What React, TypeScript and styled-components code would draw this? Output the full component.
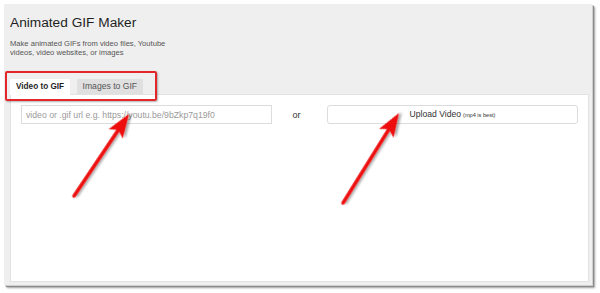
import React from "react";
import styled, { createGlobalStyle } from "styled-components";

const Global = createGlobalStyle`
  html, body { margin: 0; padding: 0; background: #ffffff; }
  body { font-family: "Liberation Sans", Arial, sans-serif; }
  * { box-sizing: border-box; }
`;

const Page = styled.div`
  position: relative;
  width: 600px;
  height: 293px;
  padding: 4px 0 0 4px;
  background: #ffffff;
  overflow: hidden;
`;

const Panel = styled.div`
  width: 588px;
  height: 281px;
  background: #efefef;
  display: flex;
  flex-direction: column;
  box-shadow: 1px 1px 0 #d0d0d0, 2px 2px 1px #8a8a8a, 3px 3px 2px rgba(0, 0, 0, 0.35);
`;

const Header = styled.div`
  padding: 11px 6px 0 6px;
`;

const Title = styled.h1`
  margin: 0;
  font-size: 13.7px;
  line-height: 16px;
  font-weight: normal;
  color: #1f1f1f;
`;

const Subtitle = styled.p`
  margin: 9px 0 0 0;
  max-width: 172px;
  font-size: 7.6px;
  line-height: 8.5px;
  color: #555;
`;

const Tabs = styled.div`
  display: flex;
  gap: 7px;
  margin-top: 22px;
  padding-left: 6px;
  position: relative;
  z-index: 1;
`;

const Tab = styled.div<{ $active?: boolean }>`
  height: ${(p) => (p.$active ? "16px" : "15px")};
  line-height: 15px;
  padding: 0 ${(p) => (p.$active ? "6px" : "5.5px")};
  font-size: ${(p) => (p.$active ? "8.2px" : "8.6px")};
  font-weight: ${(p) => (p.$active ? "bold" : "normal")};
  color: ${(p) => (p.$active ? "#1f1f1f" : "#555")};
  background: ${(p) => (p.$active ? "#ffffff" : "#e0e0e0")};
  margin-bottom: ${(p) => (p.$active ? "-1px" : "0")};
`;

const Content = styled.div`
  flex: 1;
  margin: 0 3px 3px 6px;
  background: #ffffff;
  border: 1px solid #e2e2e2;
  padding: 10px 10px 0 10px;
`;

const FormRow = styled.div`
  display: grid;
  grid-template-columns: 251px 1fr 251px;
  align-items: center;
`;

const UrlInput = styled.input`
  height: 19px;
  width: 100%;
  border: 1px solid #dcdcdc;
  padding: 0 0 0 4px;
  font-family: "Liberation Sans", Arial, sans-serif;
  font-size: 8.7px;
  color: #333;
  outline: none;
  &::placeholder { color: #9a9a9a; }
`;

const Or = styled.span`
  text-align: center;
  font-size: 9px;
  color: #333;
  padding-right: 6px;
`;

const UploadButton = styled.button`
  height: 19px;
  width: 100%;
  border: 1px solid #dcdcdc;
  border-radius: 3px;
  background: #ffffff;
  font-family: "Liberation Sans", Arial, sans-serif;
  font-size: 8.6px;
  line-height: 17px;
  color: #333;
  padding: 0;
  cursor: pointer;
`;

const Small = styled.small`
  font-size: 5.6px;
  margin-left: 2px;
`;

const Highlight = styled.div`
  position: absolute;
  left: 5px;
  top: 71px;
  width: 152px;
  height: 30px;
  border: 2px solid #e3262a;
  border-radius: 2px;
  box-shadow: 1px 1px 2px rgba(0, 0, 0, 0.3);
  pointer-events: none;
`;

const Overlay = styled.svg`
  position: absolute;
  left: 0;
  top: 0;
  pointer-events: none;
`;

function Arrow({ x1, y1, x2, y2 }: { x1: number; y1: number; x2: number; y2: number }) {
  const dx = x2 - x1;
  const dy = y2 - y1;
  const L = Math.sqrt(dx * dx + dy * dy);
  const angle = (Math.atan2(dy, dx) * 180) / Math.PI;
  return (
    <g transform={`translate(${x1} ${y1}) rotate(${angle})`} filter="url(#arrowShadow)">
      <line x1={0} y1={0} x2={L - 16} y2={0} stroke="#ee1111" strokeWidth={3.6} strokeLinecap="round" />
      <polygon points={`${L},0 ${L - 24},-8.5 ${L - 19},0 ${L - 24},8.5`} fill="#ee1111" />
    </g>
  );
}

export default function App() {
  return (
    <>
      <Global />
      <Page>
        <Panel>
          <Header>
            <Title>Animated GIF Maker</Title>
            <Subtitle>Make animated GIFs from video files, Youtube videos, video websites, or images</Subtitle>
          </Header>
          <Tabs>
            <Tab $active>Video to GIF</Tab>
            <Tab>Images to GIF</Tab>
          </Tabs>
          <Content>
            <FormRow>
              <UrlInput placeholder="video or .gif url e.g. https://youtu.be/9bZkp7q19f0" />
              <Or>or</Or>
              <UploadButton>
                Upload Video<Small>(mp4 is best)</Small>
              </UploadButton>
            </FormRow>
          </Content>
        </Panel>
        <Highlight />
        <Overlay width={600} height={293} viewBox="0 0 600 293">
          <defs>
            <filter id="arrowShadow" x="-20%" y="-20%" width="140%" height="140%">
              <feDropShadow dx="2" dy="2" stdDeviation="1.2" floodColor="#000" floodOpacity="0.35" />
            </filter>
          </defs>
          <Arrow x1={74} y1={196} x2={129} y2={114} />
          <Arrow x1={343} y1={203} x2={399} y2={113} />
        </Overlay>
      </Page>
    </>
  );
}
